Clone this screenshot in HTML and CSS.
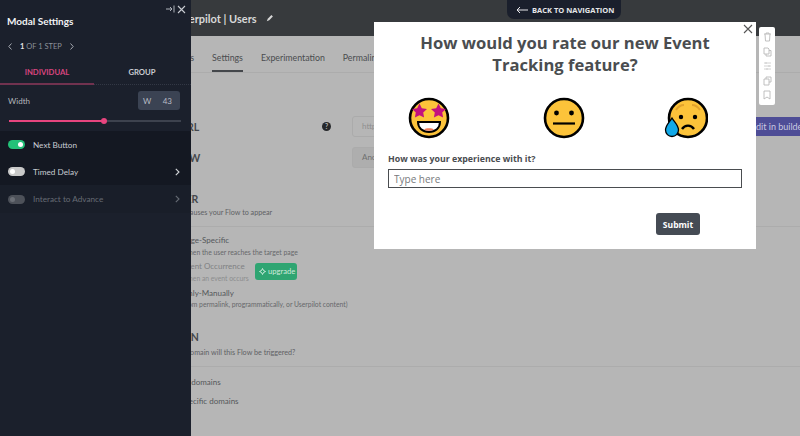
FILE: index.html
```html
<!DOCTYPE html>
<html lang="en">
<head>
<meta charset="utf-8">
<title>Modal Settings</title>
<link rel="stylesheet" href="styles.css">
</head>
<body>
<div class="app">
  <header class="topbar">
    <span class="flow-title">Userpilot | Users</span>
    <svg class="pencil" width="8" height="8" viewBox="0 0 10 10"><path d="M1 9l1.200-3L6.800 1.400 8.600 3.200 4 7.800z" fill="#d8d8d8"/></svg>
  </header>
  <nav class="tabs">
    <span class="tab tab-prev">Steps</span>
    <span class="tab tab-active">Settings</span>
    <span class="tab">Experimentation</span>
    <span class="tab">Permalink</span>
  </nav>
  <section class="form-row row-url">
    <span class="caps cap-url">PAGE URL</span>
    <span class="help">?</span>
    <span class="field">https://</span>
  </section>
  <section class="form-row row-now">
    <span class="caps cap-now">SHOW</span>
    <span class="field field-grey">Anonymous</span>
  </section>
  <section class="trigger">
    <h3 class="caps cap-er">TRIGGER</h3>
    <p class="note note-er">Pick what causes your Flow to appear</p>
  </section>
  <section class="options">
    <div class="opt opt-page">Page-Specific</div>
    <div class="sub sub-page">When the user reaches the target page</div>
    <div class="event-row">
      <div class="event-text">
        <div class="opt opt-event">Event Occurrence</div>
        <div class="sub sub-event">When an event occurs</div>
      </div>
      <span class="upgrade"><svg width="9" height="9" viewBox="0 0 9 9"><path d="M4.500 1.500l1 2 2 1-2 1-1 2-1-2-2-1 2-1z" fill="none" stroke="#d8efe4" stroke-width=".9"/></svg>upgrade</span>
    </div>
    <div class="opt opt-manual">Only-Manually</div>
    <div class="sub sub-manual">From permalink, programmatically, or Userpilot content)</div>
  </section>
  <section class="domain">
    <h3 class="caps cap-n">DOMAIN</h3>
    <p class="note note-n">On which domain will this Flow be triggered?</p>
  </section>
  <section class="domains">
    <div class="opt opt-all">All domains</div>
    <div class="opt opt-specific">Specific domains</div>
  </section>
</div>

<aside class="panel">
  <div class="panel-tools">
    <svg width="10" height="8" viewBox="0 0 10 8"><path d="M1 4h6M5 2l2 2-2 2M9 .5v7" fill="none" stroke="#aeb2ba" stroke-width="1"/></svg>
    <svg width="9" height="9" viewBox="0 0 9 9"><path d="M1 1l7 7M8 1L1 8" stroke="#c9ccd2" stroke-width="1.100"/></svg>
  </div>
  <h1 class="panel-title">Modal Settings</h1>
  <div class="stepper">
    <svg width="4" height="7" viewBox="0 0 4 7"><path d="M3.500.5L.8 3.500l2.700 3" fill="none" stroke="#a6aab2" stroke-width="1"/></svg>
    <span class="step-text"><b>1</b> OF 1 STEP</span>
    <svg width="4" height="7" viewBox="0 0 4 7"><path d="M.5.5l2.700 3-2.700 3" fill="none" stroke="#a6aab2" stroke-width="1"/></svg>
  </div>
  <div class="panel-tabs">
    <span class="ptab ptab-on">INDIVIDUAL</span>
    <span class="ptab">GROUP</span>
  </div>
  <div class="width-row">
    <span class="width-label">Width</span>
    <span class="width-box"><span>W</span><span>43</span></span>
  </div>
  <div class="slider"><span class="slider-fill"></span><span class="slider-knob"></span></div>
  <div class="toggles">
    <div class="toggle-row">
      <span class="switch switch-on"><i></i></span>
      <span class="toggle-text">Next Button</span>
    </div>
    <div class="toggle-row">
      <span class="switch switch-off"><i></i></span>
      <span class="toggle-text">Timed Delay</span>
      <svg class="chev" width="5" height="8" viewBox="0 0 5 8"><path d="M.8.800L4 4 .8 7.200" fill="none" stroke="#d5d7db" stroke-width="1.100"/></svg>
    </div>
  </div>
  <div class="toggle-row row-disabled">
    <span class="switch switch-dis"><i></i></span>
    <span class="toggle-text">Interact to Advance</span>
    <svg class="chev" width="5" height="8" viewBox="0 0 5 8"><path d="M.8.800L4 4 .8 7.200" fill="none" stroke="#666b74" stroke-width="1.100"/></svg>
  </div>
</aside>

<div class="back-nav">
  <svg width="12" height="8" viewBox="0 0 12 8"><path d="M12 4H1M4 1L1 4l3 3" fill="none" stroke="#e6e7ea" stroke-width="1"/></svg>
  <span>BACK TO NAVIGATION</span>
</div>

<div class="modal">
  <svg class="modal-close" width="10" height="10" viewBox="0 0 10 10"><path d="M1 1l8 8M9 1L1 9" stroke="#555" stroke-width="1.100"/></svg>
  <h2 class="modal-title">How would you rate our new Event Tracking feature?</h2>
  <div class="emojis">
    <svg class="emoji" width="42" height="42" viewBox="0 0 42 42">
      <circle cx="21" cy="21" r="19" fill="#fcc33a" stroke="#000" stroke-width="2.600"/>
      <path d="M11.500 6.500l2.300 4.700 5.200.7-3.800 3.600.9 5.100-4.600-2.400-4.600 2.400.9-5.100L4 11.900l5.200-.7zM30.500 6.500l2.300 4.700 5.200.7-3.800 3.600.9 5.100-4.600-2.400-4.600 2.400.9-5.100L23 11.900l5.200-.7z" fill="#c4107f"/>
      <path d="M10 25h22c0 6-4.500 10-11 10S10 31 10 25z" fill="#fff" stroke="#000" stroke-width="2"/>
      <path d="M16 32.500c1.500-1.800 8.500-1.800 10 0-2.800 1.800-7.200 1.800-10 0z" fill="#ee7c5a"/>
    </svg>
    <svg class="emoji" width="42" height="42" viewBox="0 0 42 42">
      <circle cx="21" cy="21" r="19" fill="#fcc33a" stroke="#000" stroke-width="2.600"/>
      <circle cx="13.500" cy="16" r="2.400" fill="#000"/>
      <circle cx="28.500" cy="16" r="2.400" fill="#000"/>
      <path d="M10 26.500h22" stroke="#000" stroke-width="2.200"/>
    </svg>
    <svg class="emoji emoji-sad" width="44" height="42" viewBox="0 0 44 42">
      <circle cx="24" cy="21" r="19" fill="#fcc33a" stroke="#000" stroke-width="2.600"/>
      <path d="M12 13c2-3 5-5 8-5M36 13c-2-3-5-5-8-5" fill="none" stroke="#e2a32c" stroke-width="2"/>
      <circle cx="17" cy="20" r="2.200" fill="#000"/>
      <circle cx="31" cy="20" r="2.200" fill="#000"/>
      <path d="M18 32c3-4.500 9-4.500 12 0" fill="none" stroke="#000" stroke-width="2.400"/>
      <path d="M8 21c3 5 6.500 7.500 6.500 12a6.500 6.500 0 0 1-13 0c0-4.500 3.500-7 6.500-12z" fill="#12a9e8" stroke="#000" stroke-width="1.300"/>
    </svg>
  </div>
  <label class="modal-label" for="exp">How was your experience with it?</label>
  <input class="modal-input" id="exp" placeholder="Type here">
  <div class="modal-actions"><button class="submit">Submit</button></div>
</div>

<div class="toolbar">
  <svg width="9" height="10" viewBox="0 0 9 10"><path d="M1 2h7M3 2V1h3v1M2 2l.5 7h4L7 2" fill="none" stroke="#b9b9b9" stroke-width=".9"/></svg>
  <svg width="9" height="10" viewBox="0 0 9 10"><path d="M1 1h4l1 1v5H1zM3 7v2h5V3.500H6" fill="none" stroke="#b9b9b9" stroke-width=".9"/></svg>
  <svg width="9" height="10" viewBox="0 0 9 10"><path d="M1 2h7M1 5h7M1 8h7M3 1v2M6 4v2M4 7v2" fill="none" stroke="#c6c6c6" stroke-width=".8"/></svg>
  <svg width="9" height="10" viewBox="0 0 9 10"><path d="M1 3h5v6H1zM3 3V1h5v5H6" fill="none" stroke="#b9b9b9" stroke-width=".9"/></svg>
  <svg width="8" height="10" viewBox="0 0 8 10"><path d="M1 1h6v8L4 7 1 9z" fill="none" stroke="#b9b9b9" stroke-width=".9"/></svg>
</div>

<div class="edit-builder">Edit in builder</div>
</body>
</html>
```
FILE: styles.css
```css
* { box-sizing: border-box; }
html, body { margin: 0; padding: 0; }
body {
  width: 800px;
  height: 436px;
  overflow: hidden;
  position: relative;
  background: #b6b6b6;
  font-family: "Open Sans", sans-serif;
  color: #3f4246;
}
h1, h2, h3, p { margin: 0; }

/* dimmed app underneath */
.app { width: 800px; height: 436px; overflow: hidden; font-family: Lato, sans-serif; }
.topbar {
  height: 36px;
  background: #373a3d;
  display: flex;
  align-items: center;
  padding: 0 0 0 176px;
  gap: 9px;
}
.flow-title { color: #d8d8d8; font-size: 11px; font-weight: 700; white-space: nowrap; }
.tabs {
  height: 37px;
  display: flex;
  align-items: stretch;
  padding-left: 173px;
  border-bottom: 1px solid #acacac;
  gap: 18px;
}
.tab {
  font-size: 8.800px;
  line-height: 12px;
  padding-top: 16px;
  color: #4a4c4f;
  white-space: nowrap;
}
.tab-active { border-bottom: 2px solid #44474b; height: 36px; }
.form-row { display: flex; align-items: center; }
.caps { font-size: 10.500px; font-weight: 700; color: #45484c; white-space: nowrap; line-height: 14px; }
.row-url { margin-top: 43px; height: 21px; padding-left: 150px; }
.cap-url { width: 172px; }
.help {
  width: 9px; height: 9px; border-radius: 50%;
  background: #26282b; color: #b6b6b6;
  font-size: 7px; font-weight: 700; line-height: 9px; text-align: center;
  margin-right: 21px;
}
.field {
  width: 300px; height: 21px;
  border: 1px solid #ababab; border-radius: 3px;
  padding-left: 9px;
  font-size: 8px; line-height: 19px; color: #8e8e8e;
}
.row-now { margin-top: 10px; height: 21px; padding-left: 167px; }
.cap-now { width: 185px; }
.field-grey { background: #aeaeae; color: #6f6f6f; }
.trigger { margin-top: 24px; padding-left: 154px; }
.note { font-size: 7.200px; line-height: 12px; color: #5f6165; white-space: nowrap; }
.note-er { margin-top: 1px; }
.options { margin-top: 7px; border-top: 1px solid #acacac; padding: 7px 0 0 182px; }
.opt { font-size: 8px; line-height: 13px; color: #54565a; white-space: nowrap; }
.sub { font-size: 6.800px; line-height: 10px; color: #66686b; white-space: nowrap; }
.event-row { display: flex; align-items: center; margin-top: 4px; }
.event-text { width: 73px; }
.opt-event { color: #808183; line-height: 11.500px; }
.sub-event { color: #8c8d8e; }
.upgrade {
  display: flex; align-items: center; gap: 1px;
  width: 42px; height: 17px;
  background: #2fa572; border-radius: 3px;
  color: #cfe9dc; font-size: 7.600px;
  padding-left: 3px;
  margin-top: -1px;
}
.opt-manual { margin-top: 5.500px; line-height: 11px; }
.domain { margin-top: 21px; padding-left: 154px; }
.note-n { margin-top: 2.500px; }
.domains { margin-top: 7px; border-top: 1px solid #acacac; padding: 9px 0 0 180px; }
.opt-specific { margin-top: 6.500px; }

/* settings panel */
.panel {
  position: absolute; left: 0; top: 0;
  width: 191px; height: 436px;
  background: #1b202c;
  color: #c9ccd2;
  font-family: Lato, sans-serif;
}
.panel-tools { display: flex; justify-content: flex-end; align-items: center; gap: 2px; padding: 4px 5px 0 0; height: 14px; }
.panel-title { font-size: 10px; font-weight: 700; color: #f1f2f4; line-height: 14px; padding: 0 0 0 7px; }
.stepper { display: flex; align-items: center; gap: 8px; padding-left: 8px; margin-top: 11px; height: 14px; }
.step-text { font-size: 7.500px; color: #8d919a; white-space: nowrap; }
.step-text b { color: #e5e6e9; font-weight: 700; }
.panel-tabs { display: flex; margin-top: 11px; height: 21px; border-bottom: 1px dotted #333845; }
.ptab {
  width: 94px; font-size: 7.700px; font-weight: 700; line-height: 12px;
  padding-top: 2px; text-align: center; color: #c9ccd2; height: 21px;
}
.ptab + .ptab { padding-left: 2px; }
.ptab-on { color: #d9457f; border-bottom: 2px solid #71324f; }
.width-row { display: flex; justify-content: space-between; align-items: center; padding: 6px 11px 0 8px; }
.width-label { font-size: 8px; color: #b4b7bd; }
.width-box {
  display: flex; justify-content: space-between; align-items: center;
  width: 42px; height: 19px; padding: 0 8px 0 5px;
  background: #3b4353; border-radius: 3px;
  font-size: 8px; color: #b8bcc4;
}
.slider { position: relative; height: 2px; margin: 10px 10px 0 9px; background: #3d424e; }
.slider-fill { position: absolute; left: 0; top: 0; width: 95px; height: 2px; background: #e8457f; }
.slider-knob { position: absolute; left: 92px; top: -2px; width: 6px; height: 6px; border-radius: 50%; background: #e8457f; }
.toggles { margin-top: 9px; background: #141822; }
.toggle-row { display: flex; align-items: center; height: 27px; padding: 0 11px 0 8px; }
.toggle-text { font-size: 8.200px; color: #c9ccd2; margin-left: 8px; white-space: nowrap; flex: 1; }
.switch { position: relative; width: 17px; height: 9px; border-radius: 5px; }
.switch i { position: absolute; top: 2px; width: 5px; height: 5px; border-radius: 50%; background: #fff; }
.switch-on { background: #23c178; }
.switch-on i { right: 2px; }
.switch-off { background: #c9c9c9; }
.switch-off i { left: 2px; }
.switch-dis { background: #4d5159; }
.switch-dis i { left: 2px; background: #6b6f76; }
.row-disabled { background: #191e29; height: 28px; }
.row-disabled .toggle-text { color: #666b74; }

/* overlays */
.back-nav {
  position: absolute; left: 507px; top: 0;
  width: 114px; height: 19px;
  background: #1a1f2c;
  border-radius: 0 0 7px 7px;
  display: flex; align-items: center; gap: 4px;
  padding-left: 9px;
  color: #e6e7ea; font-size: 7.500px; font-weight: 700; white-space: nowrap;
}
.modal {
  position: absolute; left: 374px; top: 22px;
  width: 382px; height: 227px;
  background: #fff;
  padding: 10px 14px 0;
}
.modal-close { position: absolute; right: 3px; top: 2px; }
.modal-title {
  font-size: 16.600px; font-weight: 700; line-height: 22px;
  color: #4a4d50; text-align: center;
  padding: 0 30px;
  height: 44px;
}
.emojis { display: flex; margin-top: 21px; height: 42px; padding-left: 20px; gap: 93px; }
.emoji-sad { margin-left: -14px; }
.modal-label { display: block; margin-top: 13px; font-size: 8.800px; font-weight: 700; color: #4a4d50; line-height: 14px; }
.modal-input {
  display: block; width: 354px; height: 19px; margin-top: 3px;
  border: 1px solid #4a4d50; border-radius: 0; outline: 0;
  padding: 0 5px;
  font-family: "Open Sans", sans-serif; font-size: 10px;
}
.modal-input::placeholder { color: #77797c; opacity: 1; }
.modal-actions { display: flex; justify-content: flex-end; margin-top: 25px; padding-right: 42px; }
.submit {
  width: 44px; height: 22px; border: 0; border-radius: 3px; padding: 0;
  background: #454b54; color: #fff;
  font-family: "Open Sans", sans-serif; font-size: 8.500px; font-weight: 700;
}
.toolbar {
  position: absolute; left: 759px; top: 27px;
  width: 16px; height: 78px;
  background: #fff; border-radius: 2px;
  display: flex; flex-direction: column; align-items: center; justify-content: space-between;
  padding: 5px 0;
}
.edit-builder {
  position: absolute; left: 756px; top: 117px;
  width: 44px; height: 19px; overflow: hidden;
  background: #4e4d96;
  color: #c9c9e0; font-family: Lato, sans-serif; font-size: 9px; line-height: 19px; white-space: nowrap;
  text-indent: -5px;
}
```
